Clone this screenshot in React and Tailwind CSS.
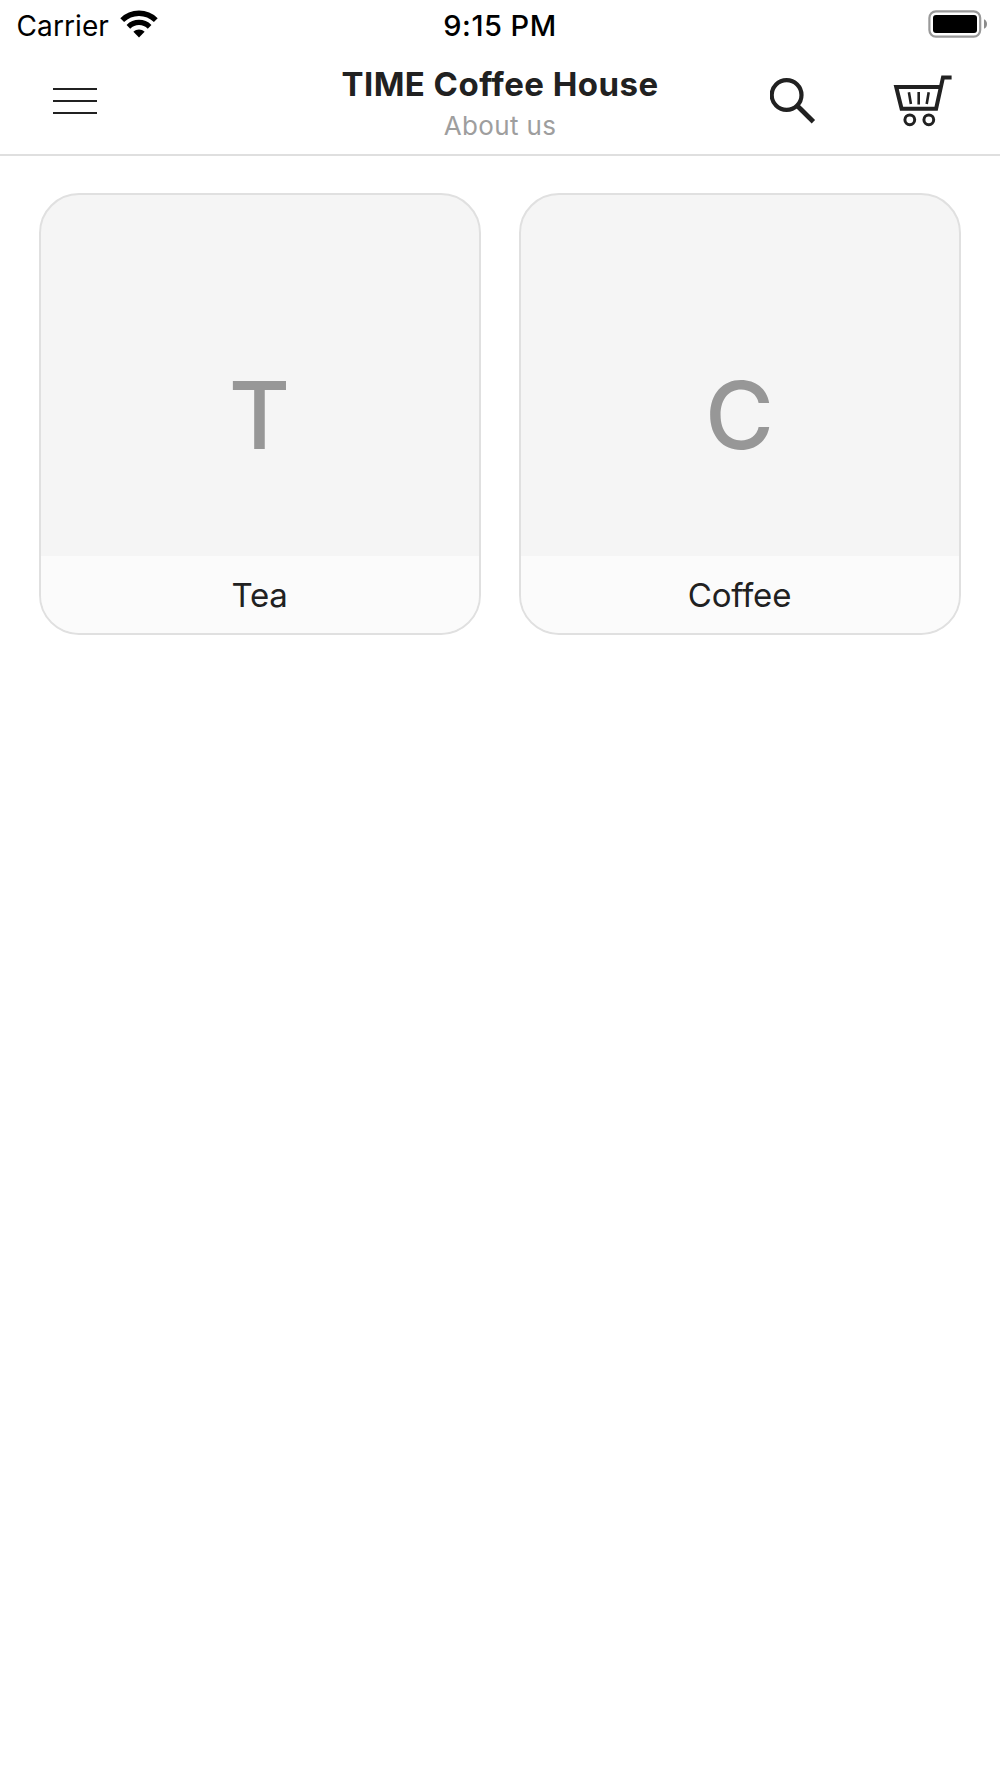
const categories = [
  { id: "tea", name: "Tea" },
  { id: "coffee", name: "Coffee" },
];

function WifiIcon() {
  return (
    <svg className="-mt-1" width="38" height="28" viewBox="0 0 38 28" fill="none">
      <path d="M2.2 10.2C11.5 1 26.5 1 35.8 10.2" stroke="#000" strokeWidth="5.4" />
      <path d="M8.4 16.8C14.4 11 23.6 11 29.6 16.8" stroke="#000" strokeWidth="5.2" />
      <path d="M13.4 21.8C16.6 18.7 21.4 18.7 24.6 21.8L19 27.4Z" fill="#000" />
    </svg>
  );
}

function BatteryIcon() {
  return (
    <svg className="-mt-1" width="60" height="28" viewBox="0 0 60 28" fill="none">
      <rect x="1.4" y="1.4" width="50.8" height="25.2" rx="6.5" stroke="#999" strokeWidth="2.2" />
      <rect x="5" y="5" width="44" height="18" rx="3" fill="#000" />
      <path d="M56 9.2C60 10.8 60 17.2 56 18.8Z" fill="#8c8c8c" />
    </svg>
  );
}

function MenuIcon() {
  return (
    <svg width="44" height="28" viewBox="0 0 44 28" fill="none">
      <path d="M0 2H44M0 14H44M0 26H44" stroke="#212121" strokeWidth="2.2" />
    </svg>
  );
}

function SearchIcon() {
  return (
    <svg width="46" height="46" viewBox="0 0 46 46" fill="none" stroke="#212121">
      <circle cx="16.6" cy="17" r="14.9" strokeWidth="4.2" />
      <path d="M27.5 28L43.4 43.8" strokeWidth="4.8" />
    </svg>
  );
}

function CartIcon() {
  return (
    <svg width="60" height="52" viewBox="0 0 60 52" fill="none" stroke="#212121">
      <path d="M58.6 2.4H50L43.1 33.8H8.6L3.2 11.9H47.7" strokeWidth="4" />
      <path d="M15.9 17.3L17.9 29M25.7 17V29.5M35.7 17.3L33.7 29" strokeWidth="2.6" />
      <circle cx="16.8" cy="44.8" r="4.9" strokeWidth="3" />
      <circle cx="35.8" cy="44.8" r="4.9" strokeWidth="3" />
    </svg>
  );
}

function StatusBar() {
  return (
    <div className="grid h-[50px] grid-cols-3 items-center text-black">
      <div className="flex items-center gap-[11px] pl-[16.5px] text-[28px] leading-[50px]">
        <span className="pt-px tracking-[0.1px]">Carrier</span>
        <WifiIcon />
      </div>
      <span className="pt-px text-center text-[29px] font-medium leading-[50px] tracking-[0.5px]">
        9:15 PM
      </span>
      <div className="flex justify-end pr-3">
        <BatteryIcon />
      </div>
    </div>
  );
}

function Header() {
  return (
    <header className="grid h-[106px] grid-cols-3 border-b-2 border-[#dfdfdf]">
      <div className="flex pl-[53px] pt-[37px]">
        <button className="h-7">
          <MenuIcon />
        </button>
      </div>
      <div className="whitespace-nowrap pt-4 text-center">
        <h1 className="text-[33px] font-bold leading-9 tracking-[0.45px] text-[#212121]">
          TIME Coffee House
        </h1>
        <p className="mt-1.5 text-[26px] leading-9 tracking-[0.35px] text-[#9e9e9e]">About us</p>
      </div>
      <div className="flex justify-end gap-[77px] pr-[47px]">
        <button className="mt-7 h-[46px]">
          <SearchIcon />
        </button>
        <button className="mt-[25px] h-[52px]">
          <CartIcon />
        </button>
      </div>
    </header>
  );
}

function CategoryCard({ category }) {
  return (
    <div className="flex h-[442px] flex-col overflow-hidden rounded-[40px] border-2 border-[#e0e0e0] bg-[#f5f5f5]">
      <div className="flex h-[361px] shrink-0 items-end justify-center pb-[84px] pr-px text-[94px] font-medium leading-[114px] text-[#979797]">
        {category.name[0]}
      </div>
      <div className="flex flex-1 items-center justify-center bg-[#fbfbfb] pr-px pt-[3px] text-[33px] tracking-[-0.2px] text-[#212121]">
        {category.name}
      </div>
    </div>
  );
}

export default function App() {
  return (
    <div className="min-h-[1778px] bg-white font-['Inter',sans-serif]">
      <StatusBar />
      <Header />
      <main className="grid grid-cols-2 gap-[38px] px-[39px] pt-[37px]">
        {categories.map((category) => (
          <CategoryCard key={category.id} category={category} />
        ))}
      </main>
    </div>
  );
}
